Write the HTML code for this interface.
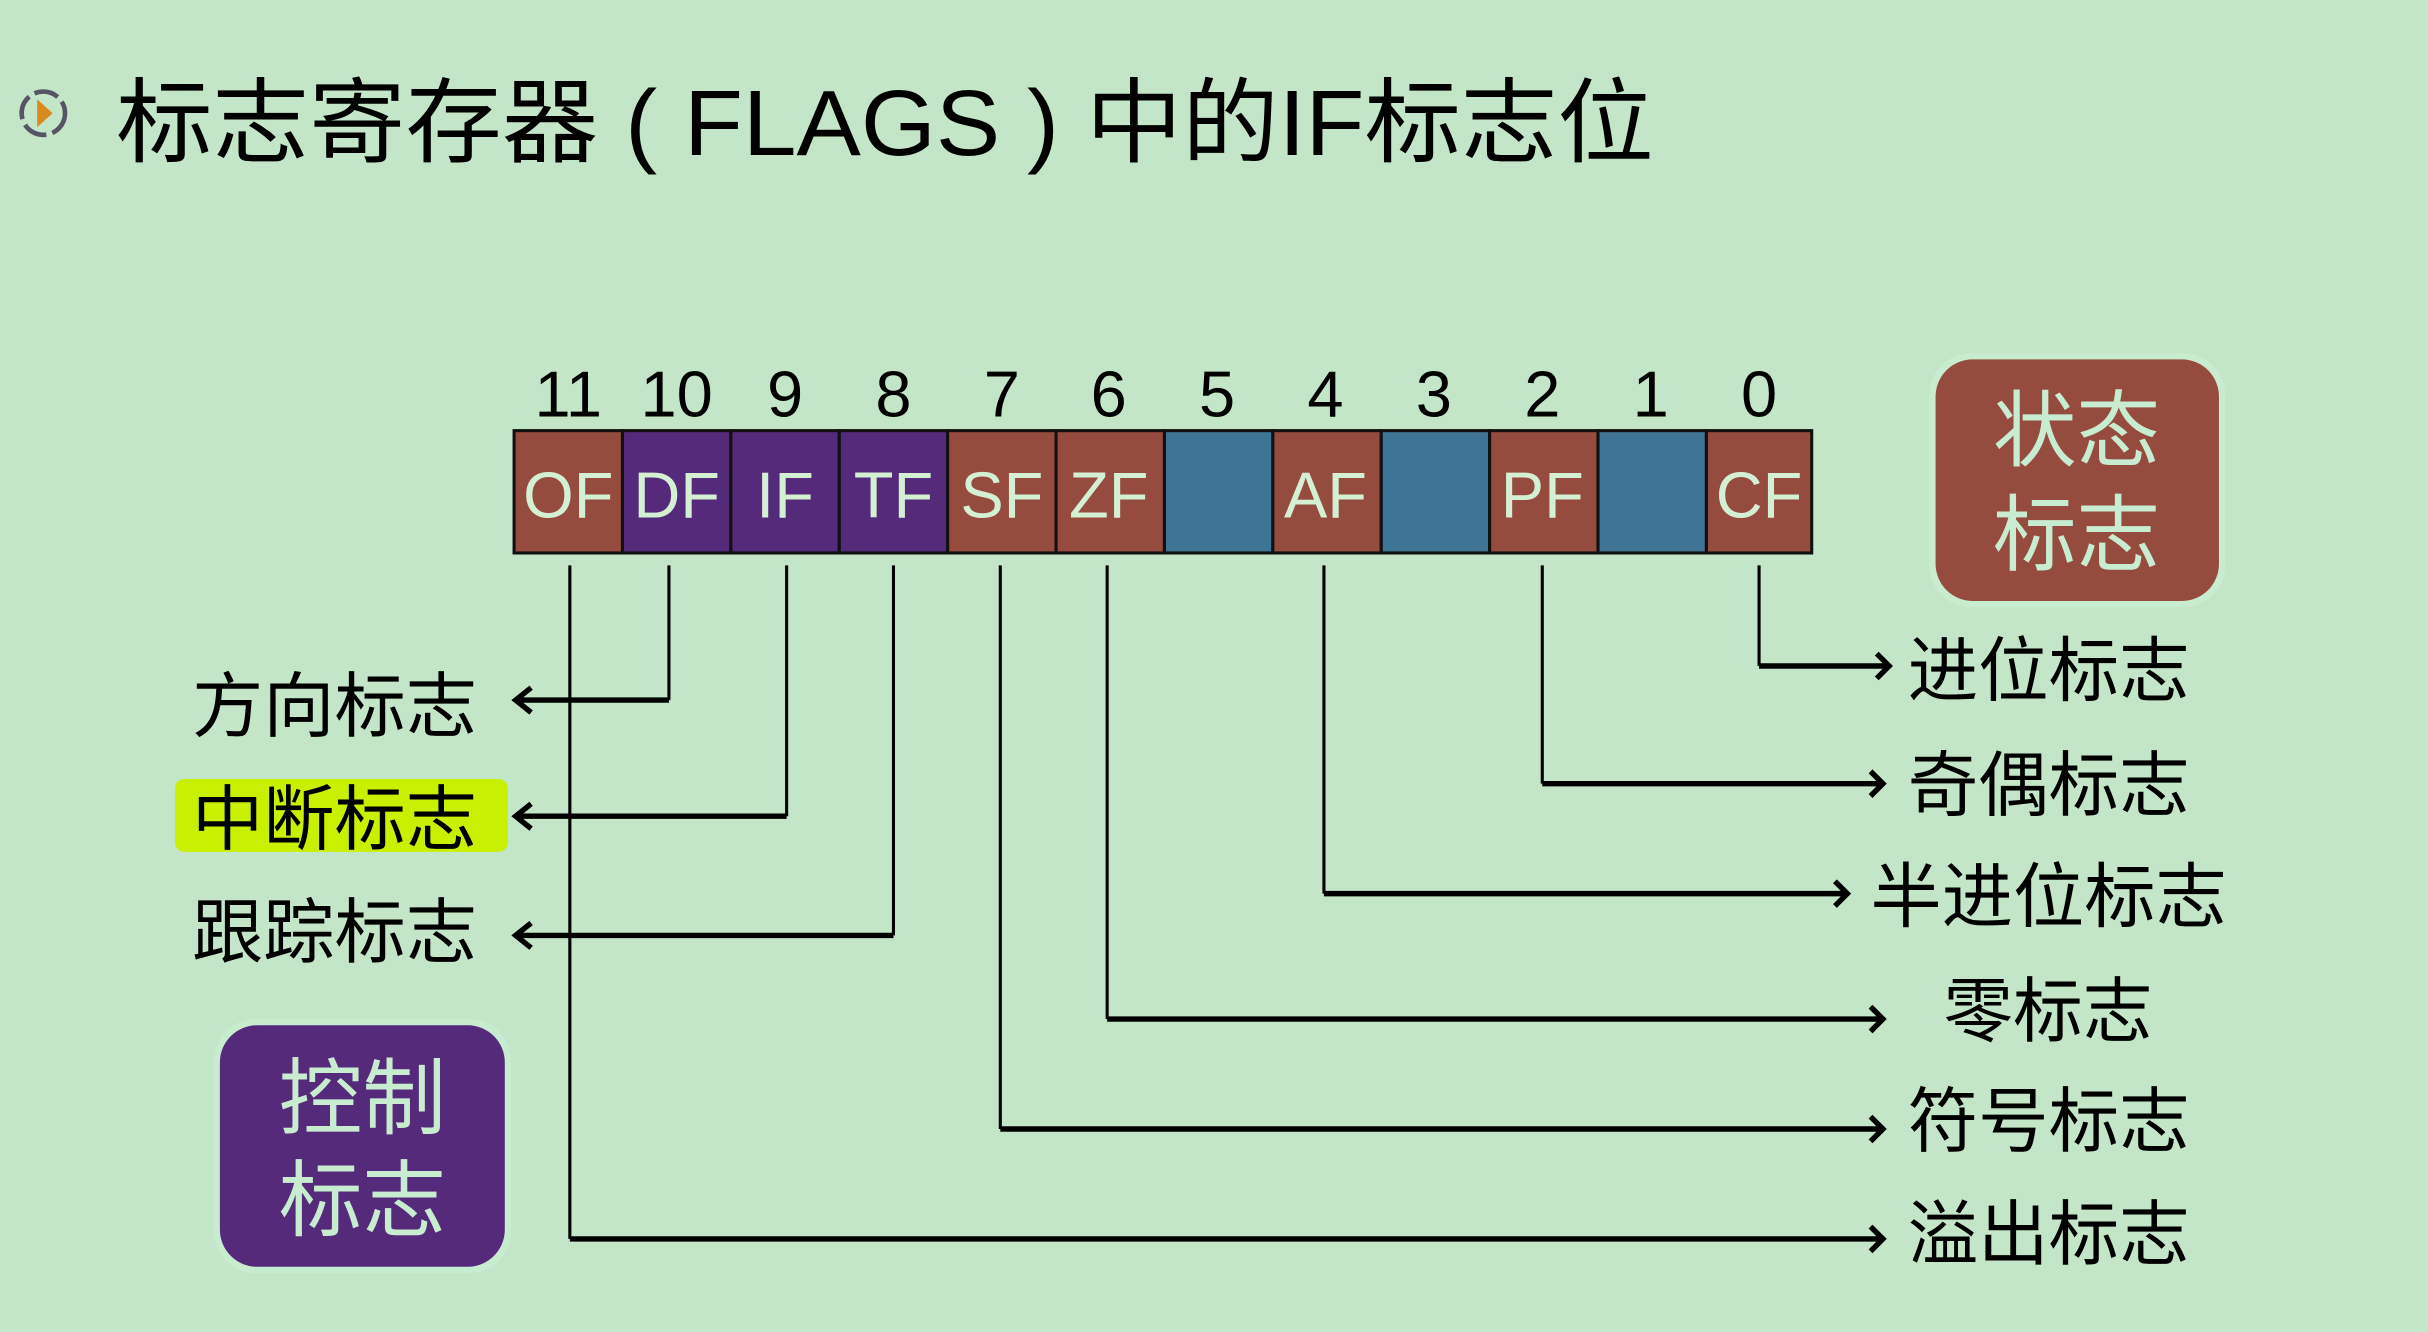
<!DOCTYPE html>
<html><head><meta charset="utf-8"><style>
html,body{margin:0;padding:0;background:#c4e6c8;}
svg{display:block;}
text{font-family:"Liberation Sans","Noto Sans CJK SC",sans-serif;}
</style></head><body>
<svg width="2428" height="1332" viewBox="0 0 1568 860" xmlns="http://www.w3.org/2000/svg">
<rect width="1568" height="860" fill="#c4e6c8"/>
<circle cx="28" cy="73" r="14" fill="none" stroke="#556" stroke-width="3" stroke-dasharray="16 4"/>
<path d="M24 64 L34 73 L24 82 Z" fill="#d98a1e"/>
<text x="75" y="100" font-size="60" fill="#000" textLength="993" lengthAdjust="spacingAndGlyphs">标志寄存器 ( FLAGS ) 中的IF标志位</text>
<g font-size="42" fill="#000" text-anchor="middle">
<text x="367" y="269">11</text><text x="437" y="269">10</text><text x="507" y="269">9</text><text x="577" y="269">8</text>
<text x="647" y="269">7</text><text x="716" y="269">6</text><text x="786" y="269">5</text><text x="856" y="269">4</text>
<text x="926" y="269">3</text><text x="996" y="269">2</text><text x="1066" y="269">1</text><text x="1136" y="269">0</text>
</g>
<g stroke="#111" stroke-width="2">
<rect x="332" y="278" width="70" height="79" fill="#964b3f"/>
<rect x="402" y="278" width="70" height="79" fill="#552a7b"/>
<rect x="472" y="278" width="70" height="79" fill="#552a7b"/>
<rect x="542" y="278" width="70" height="79" fill="#552a7b"/>
<rect x="612" y="278" width="70" height="79" fill="#964b3f"/>
<rect x="682" y="278" width="70" height="79" fill="#964b3f"/>
<rect x="752" y="278" width="70" height="79" fill="#3e7594"/>
<rect x="822" y="278" width="70" height="79" fill="#964b3f"/>
<rect x="892" y="278" width="70" height="79" fill="#3e7594"/>
<rect x="962" y="278" width="70" height="79" fill="#964b3f"/>
<rect x="1032" y="278" width="70" height="79" fill="#3e7594"/>
<rect x="1102" y="278" width="68" height="79" fill="#964b3f"/>
</g>
<g font-size="42" fill="#d4f0d2" text-anchor="middle">
<text x="367" y="334">OF</text><text x="437" y="334">DF</text><text x="507" y="334">IF</text><text x="577" y="334">TF</text>
<text x="647" y="334">SF</text><text x="716" y="334">ZF</text><text x="856" y="334">AF</text><text x="996" y="334">PF</text><text x="1136" y="334">CF</text>
</g>
<rect x="1246" y="228" width="191" height="164" rx="27" fill="#c8eccf"/>
<rect x="1250" y="232" width="183" height="156" rx="24" fill="#964b3f"/>
<text x="1341" y="297" font-size="54" fill="#c8eccf" text-anchor="middle">状态</text>
<text x="1341" y="364" font-size="54" fill="#c8eccf" text-anchor="middle">标志</text>
<rect x="138" y="658" width="192" height="164" rx="27" fill="#c8eccf"/>
<rect x="142" y="662" width="184" height="156" rx="24" fill="#552a7b"/>
<text x="234" y="728" font-size="54" fill="#c8eccf" text-anchor="middle">控制</text>
<text x="234" y="794" font-size="54" fill="#c8eccf" text-anchor="middle">标志</text>
<rect x="113" y="503" width="215" height="47" rx="6" fill="#c8f000"/>
<g stroke="#000" fill="none" stroke-width="2">
<path d="M368 365 V800"/><path d="M432 365 V452"/><path d="M508 365 V527"/><path d="M577 365 V604"/>
<path d="M646 365 V729"/><path d="M715 365 V658"/><path d="M855 365 V577"/><path d="M996 365 V506"/><path d="M1136 365 V430"/>
</g>
<g stroke="#000" fill="none" stroke-width="3.5">
<path d="M432 452 H333 M343 444 L333 452 L343 460"/>
<path d="M508 527 H333 M343 519 L333 527 L343 535"/>
<path d="M577 604 H333 M343 596 L333 604 L343 612"/>
<path d="M1136 430 H1220 M1212 422 L1220 430 L1212 438"/>
<path d="M996 506 H1216 M1208 498 L1216 506 L1208 514"/>
<path d="M855 577 H1193 M1185 569 L1193 577 L1185 585"/>
<path d="M715 658 H1216 M1208 650 L1216 658 L1208 666"/>
<path d="M646 729 H1216 M1208 721 L1216 729 L1208 737"/>
<path d="M368 800 H1216 M1208 792 L1216 800 L1208 808"/>
</g>
<g font-size="46" fill="#000">
<text x="124" y="472" textLength="184" lengthAdjust="spacingAndGlyphs">方向标志</text>
<text x="124" y="545" textLength="184" lengthAdjust="spacingAndGlyphs">中断标志</text>
<text x="124" y="618" textLength="184" lengthAdjust="spacingAndGlyphs">跟踪标志</text>
<text x="1232" y="449" textLength="182" lengthAdjust="spacingAndGlyphs">进位标志</text>
<text x="1232" y="523" textLength="182" lengthAdjust="spacingAndGlyphs">奇偶标志</text>
<text x="1208" y="595" textLength="230" lengthAdjust="spacingAndGlyphs">半进位标志</text>
<text x="1255" y="669" textLength="135" lengthAdjust="spacingAndGlyphs">零标志</text>
<text x="1232" y="740" textLength="182" lengthAdjust="spacingAndGlyphs">符号标志</text>
<text x="1232" y="813" textLength="182" lengthAdjust="spacingAndGlyphs">溢出标志</text>
</g>
</svg>
</body></html>
